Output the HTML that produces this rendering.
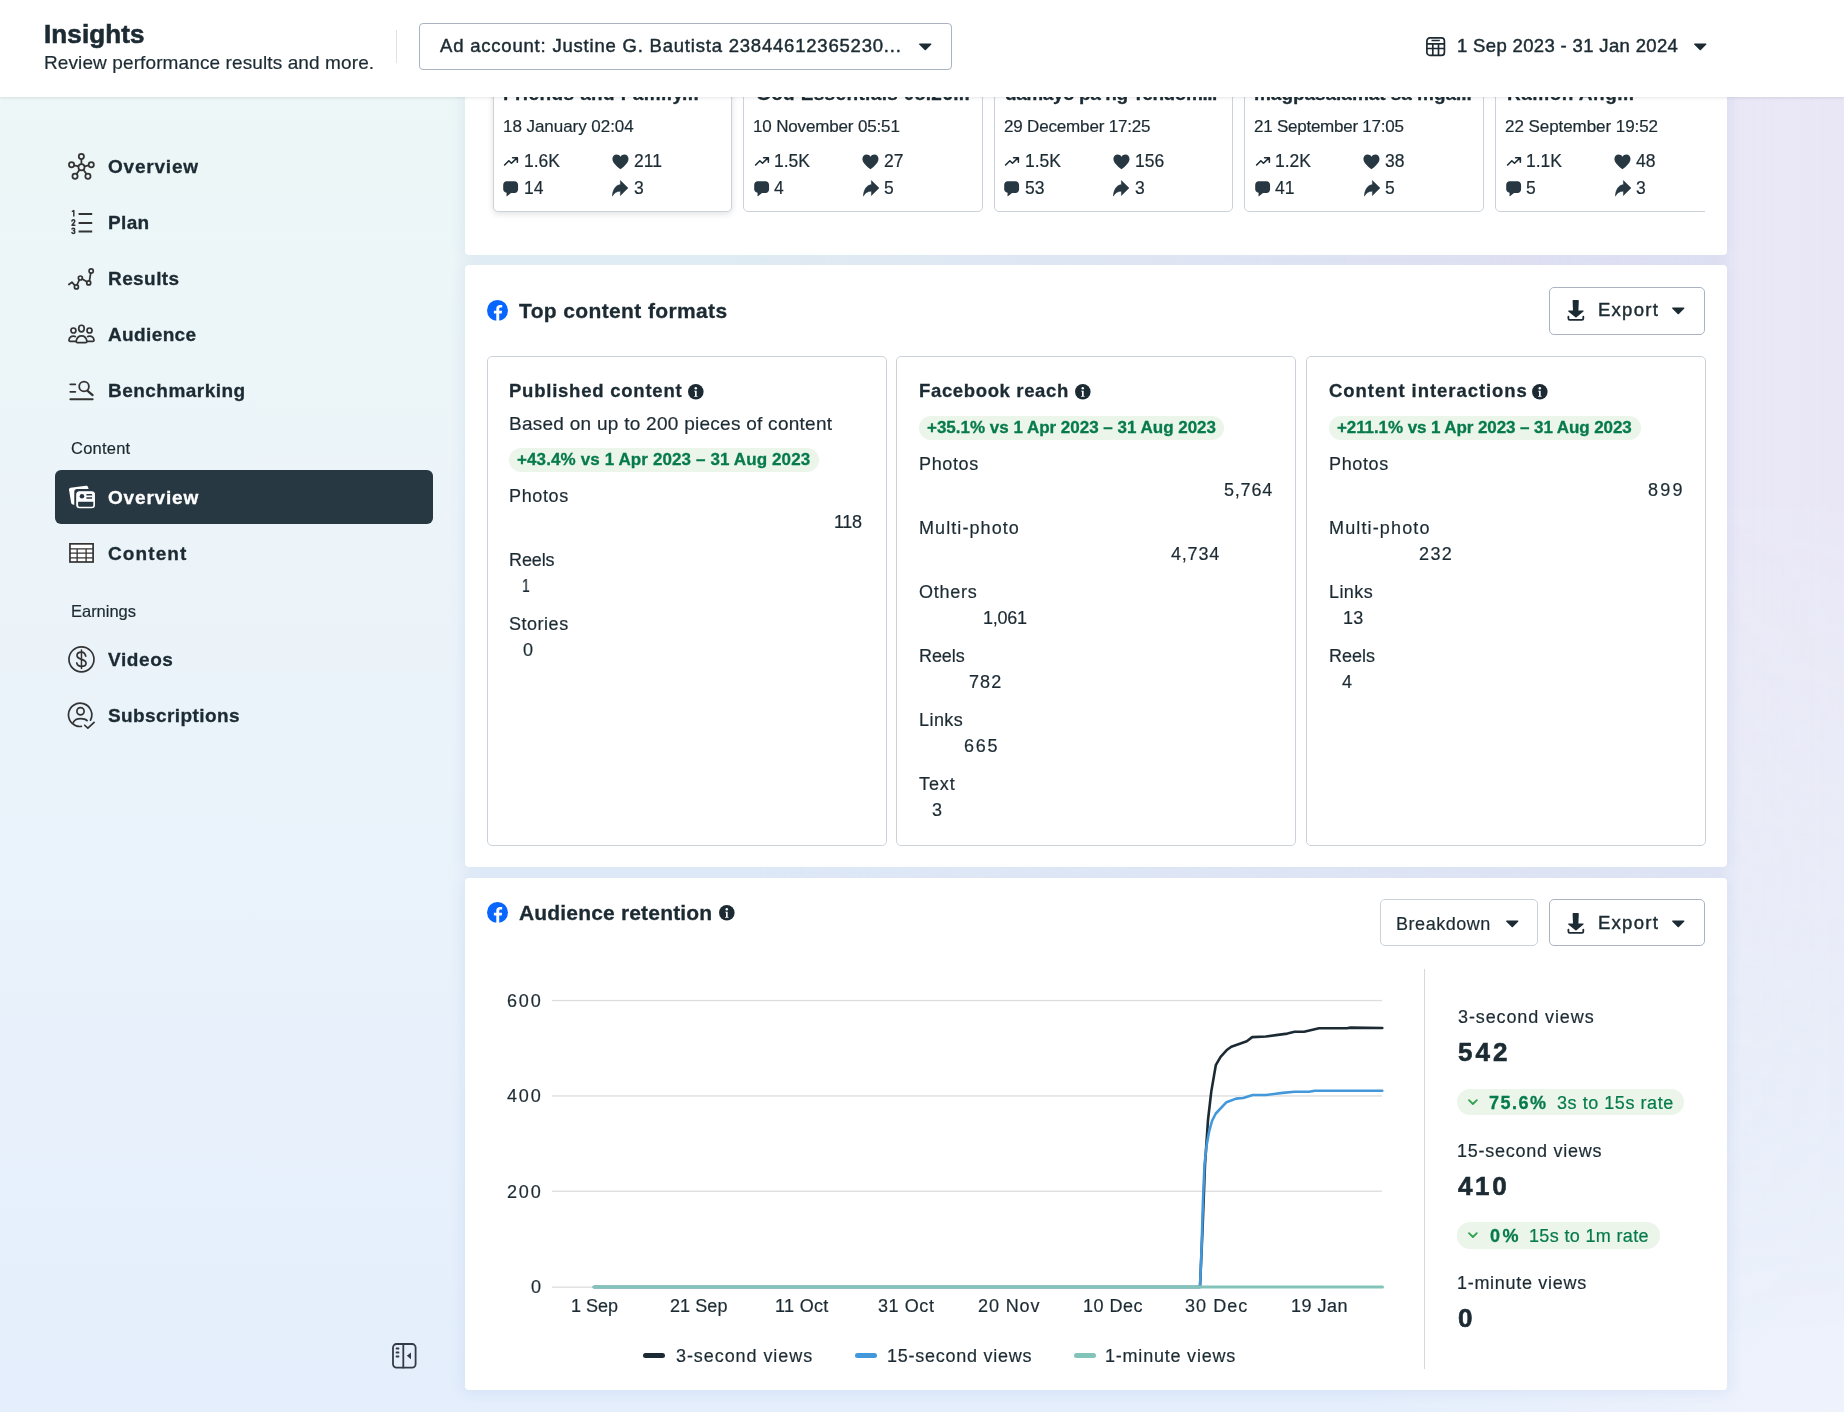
<!DOCTYPE html><html><head><meta charset="utf-8"><style>
*{margin:0;padding:0}
html,body{width:1844px;height:1412px;overflow:hidden}
body{position:relative;font-family:"Liberation Sans",sans-serif;color:#1c2b33;
background:radial-gradient(ellipse 500px 400px at 100% 100%,rgba(240,243,252,0.9),rgba(240,243,252,0)),linear-gradient(180deg,#edf7f6 0%,#ecf5f8 25%,#ebf3fa 50%,#e8f1fb 75%,#e4eefc 100%);}
#lav{position:absolute;left:0;top:0;width:1844px;height:1412px;
background:linear-gradient(90deg,rgba(233,231,246,0) 0%,rgba(233,231,246,0) 40%,rgba(233,231,246,0.85) 80%,rgba(233,231,246,1) 100%);
-webkit-mask-image:linear-gradient(180deg,#000 0%,#000 35%,rgba(0,0,0,0.5) 65%,transparent 95%);}
.t{position:absolute;white-space:nowrap;line-height:1;}
body>div,body>svg{will-change:transform}
svg{overflow:visible}
</style></head><body><div id="lav"></div>
<div style="position:absolute;left:465px;top:40px;width:1262px;height:215px;background:#fff;border-radius:4px;box-shadow:0 0 14px 3px rgba(70,110,190,0.09);"></div>
<div style="position:absolute;left:465px;top:265px;width:1262px;height:602px;background:#fff;border-radius:4px;box-shadow:0 0 14px 3px rgba(70,110,190,0.09);"></div>
<div style="position:absolute;left:465px;top:878px;width:1262px;height:512px;background:#fff;border-radius:4px;box-shadow:0 0 14px 3px rgba(70,110,190,0.09);"></div>
<div style="position:absolute;left:487px;top:40px;width:1218px;height:200px;overflow:hidden">
<div style="position:absolute;left:5.5px;top:0px;width:239.5px;height:172px;border:1px solid #cbd2d9;border-radius:5px;box-sizing:border-box;background:#fff;box-shadow:0 2px 6px rgba(0,0,0,0.12);"></div>
<div style="position:absolute;left:256px;top:0px;width:239.5px;height:172px;border:1px solid #cbd2d9;border-radius:5px;box-sizing:border-box;background:#fff;"></div>
<div style="position:absolute;left:506.5px;top:0px;width:239.5px;height:172px;border:1px solid #cbd2d9;border-radius:5px;box-sizing:border-box;background:#fff;"></div>
<div style="position:absolute;left:757px;top:0px;width:239.5px;height:172px;border:1px solid #cbd2d9;border-radius:5px;box-sizing:border-box;background:#fff;"></div>
<div style="position:absolute;left:1008px;top:0px;width:239.5px;height:172px;border:1px solid #cbd2d9;border-radius:5px;box-sizing:border-box;background:#fff;"></div>
</div>
<div class="t" style="left:503.40px;top:84.00px;font-size:19px;letter-spacing:0.404px;font-weight:700;-webkit-text-stroke:0.3px currentColor;">Friends and Family...</div>
<div class="t" style="left:502.60px;top:117.90px;font-size:17px;letter-spacing:-0.047px;-webkit-text-stroke:0.2px currentColor;">18 January 02:04</div>
<svg style="position:absolute;left:503.0px;top:155.5px;" width="16" height="11" viewBox="0 0 16 11"><path d="M1.6 9.0L5.85 4.77L8.5 7.25L14.0 1.9 M9.6 1.76H14.35V6.2" fill="none" stroke="#1c2b33" stroke-width="1.6" stroke-linecap="round" stroke-linejoin="round"/></svg>
<div class="t" style="left:523.90px;top:153.00px;font-size:17.5px;-webkit-text-stroke:0.2px currentColor;">1.6K</div>
<svg style="position:absolute;left:611.5px;top:153.5px;" width="17" height="16" viewBox="0 0 17 16"><path d="M8.5 15.2C7.6 14.5 0.4 9.6 0.4 5C0.4 2.5 2.2 0.6 4.6 0.6C6.3 0.6 7.7 1.5 8.5 2.8C9.3 1.5 10.7 0.6 12.4 0.6C14.8 0.6 16.5 2.5 16.5 5C16.5 9.6 9.4 14.5 8.5 15.2Z" fill="#283843"/></svg>
<div class="t" style="left:633.90px;top:153.00px;font-size:17.5px;-webkit-text-stroke:0.2px currentColor;">211</div>
<svg style="position:absolute;left:503.0px;top:180.5px;" width="16" height="16" viewBox="0 0 16 16"><path d="M3.7 0.3H11.6C13.5 0.3 15.06 1.9 15.06 3.8V8.5C15.06 10.4 13.5 12 11.6 12H8L3.9 15.2C3.7 15.3 3.5 15.2 3.5 15L3.6 11.8C1.6 11.5 .2 10.1 .2 8.3V3.8C.2 1.9 1.8 .3 3.7 .3Z" fill="#283843"/></svg>
<div class="t" style="left:523.90px;top:180.00px;font-size:17.5px;-webkit-text-stroke:0.2px currentColor;">14</div>
<svg style="position:absolute;left:612.0px;top:179.5px;" width="17" height="17" viewBox="0 0 17 17"><path d="M8.4 0.6L16 8L8.4 15.5V11.2C4.8 11.2 2.3 12.8 0.3 16.2C0.8 9.5 3.6 5.2 8.4 4.6Z" fill="#283843" stroke="#283843" stroke-width="0.5" stroke-linejoin="round"/></svg>
<div class="t" style="left:633.90px;top:180.00px;font-size:17.5px;-webkit-text-stroke:0.2px currentColor;">3</div>
<div class="t" style="left:755.70px;top:84.00px;font-size:19px;letter-spacing:0.352px;font-weight:700;-webkit-text-stroke:0.3px currentColor;">God Essentials 08.26...</div>
<div class="t" style="left:753.10px;top:117.90px;font-size:17px;letter-spacing:-0.153px;-webkit-text-stroke:0.2px currentColor;">10 November 05:51</div>
<svg style="position:absolute;left:753.5px;top:155.5px;" width="16" height="11" viewBox="0 0 16 11"><path d="M1.6 9.0L5.85 4.77L8.5 7.25L14.0 1.9 M9.6 1.76H14.35V6.2" fill="none" stroke="#1c2b33" stroke-width="1.6" stroke-linecap="round" stroke-linejoin="round"/></svg>
<div class="t" style="left:774.40px;top:153.00px;font-size:17.5px;-webkit-text-stroke:0.2px currentColor;">1.5K</div>
<svg style="position:absolute;left:862px;top:153.5px;" width="17" height="16" viewBox="0 0 17 16"><path d="M8.5 15.2C7.6 14.5 0.4 9.6 0.4 5C0.4 2.5 2.2 0.6 4.6 0.6C6.3 0.6 7.7 1.5 8.5 2.8C9.3 1.5 10.7 0.6 12.4 0.6C14.8 0.6 16.5 2.5 16.5 5C16.5 9.6 9.4 14.5 8.5 15.2Z" fill="#283843"/></svg>
<div class="t" style="left:884.40px;top:153.00px;font-size:17.5px;-webkit-text-stroke:0.2px currentColor;">27</div>
<svg style="position:absolute;left:753.5px;top:180.5px;" width="16" height="16" viewBox="0 0 16 16"><path d="M3.7 0.3H11.6C13.5 0.3 15.06 1.9 15.06 3.8V8.5C15.06 10.4 13.5 12 11.6 12H8L3.9 15.2C3.7 15.3 3.5 15.2 3.5 15L3.6 11.8C1.6 11.5 .2 10.1 .2 8.3V3.8C.2 1.9 1.8 .3 3.7 .3Z" fill="#283843"/></svg>
<div class="t" style="left:774.40px;top:180.00px;font-size:17.5px;-webkit-text-stroke:0.2px currentColor;">4</div>
<svg style="position:absolute;left:862.5px;top:179.5px;" width="17" height="17" viewBox="0 0 17 17"><path d="M8.4 0.6L16 8L8.4 15.5V11.2C4.8 11.2 2.3 12.8 0.3 16.2C0.8 9.5 3.6 5.2 8.4 4.6Z" fill="#283843" stroke="#283843" stroke-width="0.5" stroke-linejoin="round"/></svg>
<div class="t" style="left:884.40px;top:180.00px;font-size:17.5px;-webkit-text-stroke:0.2px currentColor;">5</div>
<div class="t" style="left:1005.10px;top:84.00px;font-size:19px;letter-spacing:-0.426px;font-weight:700;-webkit-text-stroke:0.3px currentColor;">damayo pa ng Tehdom...</div>
<div class="t" style="left:1003.60px;top:117.90px;font-size:17px;letter-spacing:-0.172px;-webkit-text-stroke:0.2px currentColor;">29 December 17:25</div>
<svg style="position:absolute;left:1004.0px;top:155.5px;" width="16" height="11" viewBox="0 0 16 11"><path d="M1.6 9.0L5.85 4.77L8.5 7.25L14.0 1.9 M9.6 1.76H14.35V6.2" fill="none" stroke="#1c2b33" stroke-width="1.6" stroke-linecap="round" stroke-linejoin="round"/></svg>
<div class="t" style="left:1024.90px;top:153.00px;font-size:17.5px;-webkit-text-stroke:0.2px currentColor;">1.5K</div>
<svg style="position:absolute;left:1112.5px;top:153.5px;" width="17" height="16" viewBox="0 0 17 16"><path d="M8.5 15.2C7.6 14.5 0.4 9.6 0.4 5C0.4 2.5 2.2 0.6 4.6 0.6C6.3 0.6 7.7 1.5 8.5 2.8C9.3 1.5 10.7 0.6 12.4 0.6C14.8 0.6 16.5 2.5 16.5 5C16.5 9.6 9.4 14.5 8.5 15.2Z" fill="#283843"/></svg>
<div class="t" style="left:1134.90px;top:153.00px;font-size:17.5px;-webkit-text-stroke:0.2px currentColor;">156</div>
<svg style="position:absolute;left:1004.0px;top:180.5px;" width="16" height="16" viewBox="0 0 16 16"><path d="M3.7 0.3H11.6C13.5 0.3 15.06 1.9 15.06 3.8V8.5C15.06 10.4 13.5 12 11.6 12H8L3.9 15.2C3.7 15.3 3.5 15.2 3.5 15L3.6 11.8C1.6 11.5 .2 10.1 .2 8.3V3.8C.2 1.9 1.8 .3 3.7 .3Z" fill="#283843"/></svg>
<div class="t" style="left:1024.90px;top:180.00px;font-size:17.5px;-webkit-text-stroke:0.2px currentColor;">53</div>
<svg style="position:absolute;left:1113.0px;top:179.5px;" width="17" height="17" viewBox="0 0 17 17"><path d="M8.4 0.6L16 8L8.4 15.5V11.2C4.8 11.2 2.3 12.8 0.3 16.2C0.8 9.5 3.6 5.2 8.4 4.6Z" fill="#283843" stroke="#283843" stroke-width="0.5" stroke-linejoin="round"/></svg>
<div class="t" style="left:1134.90px;top:180.00px;font-size:17.5px;-webkit-text-stroke:0.2px currentColor;">3</div>
<div class="t" style="left:1254.30px;top:84.00px;font-size:19px;letter-spacing:-0.038px;font-weight:700;-webkit-text-stroke:0.3px currentColor;">magpasalamat sa mga...</div>
<div class="t" style="left:1254.10px;top:117.90px;font-size:17px;letter-spacing:-0.242px;-webkit-text-stroke:0.2px currentColor;">21 September 17:05</div>
<svg style="position:absolute;left:1254.5px;top:155.5px;" width="16" height="11" viewBox="0 0 16 11"><path d="M1.6 9.0L5.85 4.77L8.5 7.25L14.0 1.9 M9.6 1.76H14.35V6.2" fill="none" stroke="#1c2b33" stroke-width="1.6" stroke-linecap="round" stroke-linejoin="round"/></svg>
<div class="t" style="left:1275.40px;top:153.00px;font-size:17.5px;-webkit-text-stroke:0.2px currentColor;">1.2K</div>
<svg style="position:absolute;left:1363px;top:153.5px;" width="17" height="16" viewBox="0 0 17 16"><path d="M8.5 15.2C7.6 14.5 0.4 9.6 0.4 5C0.4 2.5 2.2 0.6 4.6 0.6C6.3 0.6 7.7 1.5 8.5 2.8C9.3 1.5 10.7 0.6 12.4 0.6C14.8 0.6 16.5 2.5 16.5 5C16.5 9.6 9.4 14.5 8.5 15.2Z" fill="#283843"/></svg>
<div class="t" style="left:1385.40px;top:153.00px;font-size:17.5px;-webkit-text-stroke:0.2px currentColor;">38</div>
<svg style="position:absolute;left:1254.5px;top:180.5px;" width="16" height="16" viewBox="0 0 16 16"><path d="M3.7 0.3H11.6C13.5 0.3 15.06 1.9 15.06 3.8V8.5C15.06 10.4 13.5 12 11.6 12H8L3.9 15.2C3.7 15.3 3.5 15.2 3.5 15L3.6 11.8C1.6 11.5 .2 10.1 .2 8.3V3.8C.2 1.9 1.8 .3 3.7 .3Z" fill="#283843"/></svg>
<div class="t" style="left:1275.40px;top:180.00px;font-size:17.5px;-webkit-text-stroke:0.2px currentColor;">41</div>
<svg style="position:absolute;left:1363.5px;top:179.5px;" width="17" height="17" viewBox="0 0 17 17"><path d="M8.4 0.6L16 8L8.4 15.5V11.2C4.8 11.2 2.3 12.8 0.3 16.2C0.8 9.5 3.6 5.2 8.4 4.6Z" fill="#283843" stroke="#283843" stroke-width="0.5" stroke-linejoin="round"/></svg>
<div class="t" style="left:1385.40px;top:180.00px;font-size:17.5px;-webkit-text-stroke:0.2px currentColor;">5</div>
<div class="t" style="left:1506.50px;top:84.00px;font-size:19px;letter-spacing:0.482px;font-weight:700;-webkit-text-stroke:0.3px currentColor;">Ramon Ang...</div>
<div class="t" style="left:1505.10px;top:117.90px;font-size:17px;letter-spacing:-0.060px;-webkit-text-stroke:0.2px currentColor;">22 September 19:52</div>
<svg style="position:absolute;left:1505.5px;top:155.5px;" width="16" height="11" viewBox="0 0 16 11"><path d="M1.6 9.0L5.85 4.77L8.5 7.25L14.0 1.9 M9.6 1.76H14.35V6.2" fill="none" stroke="#1c2b33" stroke-width="1.6" stroke-linecap="round" stroke-linejoin="round"/></svg>
<div class="t" style="left:1526.40px;top:153.00px;font-size:17.5px;-webkit-text-stroke:0.2px currentColor;">1.1K</div>
<svg style="position:absolute;left:1614px;top:153.5px;" width="17" height="16" viewBox="0 0 17 16"><path d="M8.5 15.2C7.6 14.5 0.4 9.6 0.4 5C0.4 2.5 2.2 0.6 4.6 0.6C6.3 0.6 7.7 1.5 8.5 2.8C9.3 1.5 10.7 0.6 12.4 0.6C14.8 0.6 16.5 2.5 16.5 5C16.5 9.6 9.4 14.5 8.5 15.2Z" fill="#283843"/></svg>
<div class="t" style="left:1636.40px;top:153.00px;font-size:17.5px;-webkit-text-stroke:0.2px currentColor;">48</div>
<svg style="position:absolute;left:1505.5px;top:180.5px;" width="16" height="16" viewBox="0 0 16 16"><path d="M3.7 0.3H11.6C13.5 0.3 15.06 1.9 15.06 3.8V8.5C15.06 10.4 13.5 12 11.6 12H8L3.9 15.2C3.7 15.3 3.5 15.2 3.5 15L3.6 11.8C1.6 11.5 .2 10.1 .2 8.3V3.8C.2 1.9 1.8 .3 3.7 .3Z" fill="#283843"/></svg>
<div class="t" style="left:1526.40px;top:180.00px;font-size:17.5px;-webkit-text-stroke:0.2px currentColor;">5</div>
<svg style="position:absolute;left:1614.5px;top:179.5px;" width="17" height="17" viewBox="0 0 17 17"><path d="M8.4 0.6L16 8L8.4 15.5V11.2C4.8 11.2 2.3 12.8 0.3 16.2C0.8 9.5 3.6 5.2 8.4 4.6Z" fill="#283843" stroke="#283843" stroke-width="0.5" stroke-linejoin="round"/></svg>
<div class="t" style="left:1636.40px;top:180.00px;font-size:17.5px;-webkit-text-stroke:0.2px currentColor;">3</div>
<div style="position:absolute;left:0px;top:0px;width:1844px;height:97px;background:#fff;box-shadow:0 1px 3px rgba(0,0,0,0.10);z-index:5"></div>
<div class="t" style="left:44.20px;top:21.00px;font-size:26px;letter-spacing:0.113px;font-weight:700;-webkit-text-stroke:0.6px currentColor;z-index:6;">Insights</div>
<div class="t" style="left:44.20px;top:53.20px;font-size:19px;letter-spacing:0.108px;-webkit-text-stroke:0.2px currentColor;z-index:6;">Review performance results and more.</div>
<div style="position:absolute;left:396px;top:30px;width:1px;height:33px;background:#dfe3e8;z-index:6"></div>
<div style="position:absolute;left:419px;top:23px;width:532.5px;height:47px;border:1px solid #a9b4c0;border-radius:4px;box-sizing:border-box;z-index:6;background:#fff"></div>
<div class="t" style="left:440.40px;top:37.00px;font-size:18.5px;letter-spacing:0.795px;-webkit-text-stroke:0.45px currentColor;z-index:7;">Ad account: Justine G. Bautista 23844612365230...</div>
<svg style="z-index:7;position:absolute;left:919.3px;top:43px;" width="12.5" height="7.5" viewBox="0 0 12.5 7.5"><path d="M0.6 0.6H11.9C12.4 .6 12.6 1.2 12.3 1.5L6.9 7C6.6 7.3 6 7.3 5.7 7L0.2 1.5C-.1 1.2 .1 .6 .6 .6Z" fill="#1c2b33"/></svg>
<svg style="z-index:7;position:absolute;left:1425.8px;top:36.6px;" width="20" height="20" viewBox="0 0 20 20"><g fill="none" stroke="#1c2b33" stroke-width="1.7"><rect x="0.9" y="0.9" width="17.5" height="17.5" rx="3"/><path d="M0.9 6.8H18.4 M0.9 11.5H18.4 M6.8 6.8V18.4 M12.5 6.8V18.4 M5.5 3.5H13.8"/></g></svg>
<div class="t" style="left:1457.00px;top:36.80px;font-size:18.5px;letter-spacing:0.346px;-webkit-text-stroke:0.45px currentColor;z-index:7;">1 Sep 2023 - 31 Jan 2024</div>
<svg style="z-index:7;position:absolute;left:1694px;top:43.3px;" width="12.5" height="7.5" viewBox="0 0 12.5 7.5"><path d="M0.6 0.6H11.9C12.4 .6 12.6 1.2 12.3 1.5L6.9 7C6.6 7.3 6 7.3 5.7 7L0.2 1.5C-.1 1.2 .1 .6 .6 .6Z" fill="#1c2b33"/></svg>
<div style="position:absolute;left:55px;top:470px;width:377.5px;height:53.5px;background:#283843;border-radius:6px;"></div>
<svg style="position:absolute;left:68px;top:153px;" width="27" height="27" viewBox="0 0 27 27"><g stroke="#333" stroke-width="1.75" fill="none"><circle cx="13.48" cy="14.2" r="3.05"/><circle cx="13.36" cy="3.44" r="2.6"/><circle cx="3.56" cy="11.75" r="2.6"/><circle cx="23.27" cy="11.75" r="2.6"/><circle cx="7.03" cy="23.27" r="2.6"/><circle cx="19.93" cy="23.27" r="2.6"/><path d="M13.4 6.0V11.2 M6.1 12.3L10.5 13.4 M20.7 12.3L16.4 13.4 M8.5 21.1L11.6 16.7 M18.5 21.1L15.4 16.7"/></g></svg>
<div class="t" style="left:108.20px;top:157.00px;font-size:19px;letter-spacing:0.793px;font-weight:700;-webkit-text-stroke:0.3px currentColor;">Overview</div>
<svg style="position:absolute;left:70.5px;top:210px;" width="22" height="25" viewBox="0 0 22 25"><g stroke="#333" stroke-width="2" stroke-linecap="butt"><path d="M7.6 3.9H21.2 M7.6 12.9H21.2 M7.6 21.6H21.2"/></g><g fill="none" stroke="#333" stroke-width="1.45" stroke-linejoin="round" stroke-linecap="round"><path d="M1.3 1.3L2.8 0.6V6.1"/><path d="M0.9 11.0C1.1 10.1 1.7 9.7 2.4 9.7C3.2 9.7 3.8 10.2 3.8 11.0C3.8 12.2 2.4 13.2 1.0 15.2H3.9"/><path d="M1.0 18.9C1.3 18.4 1.8 18.2 2.4 18.2C3.2 18.2 3.7 18.7 3.7 19.4C3.7 20.1 3.1 20.6 2.3 20.6C3.2 20.6 3.9 21.1 3.9 22.0C3.9 22.9 3.2 23.5 2.3 23.5C1.7 23.5 1.1 23.2 0.9 22.6"/></g></svg>
<div class="t" style="left:108.20px;top:212.70px;font-size:19px;letter-spacing:0.337px;font-weight:700;-webkit-text-stroke:0.3px currentColor;">Plan</div>
<svg style="position:absolute;left:68px;top:267.5px;" width="27" height="22" viewBox="0 0 27 22"><g stroke="#333" stroke-width="1.7" fill="none" stroke-linecap="round" stroke-linejoin="round"><path d="M0.9 16.5L3.94 14.16L6.6 17.1 M9.0 16.9L11.3 11.9 M14.3 10.9L18.9 13.7 M21.4 13.0L22.7 5.1"/><circle cx="8.4" cy="18.92" r="2.0"/><circle cx="12.37" cy="9.99" r="2.0"/><circle cx="20.7" cy="14.95" r="2.0"/><circle cx="23.18" cy="3.05" r="2.1"/></g></svg>
<div class="t" style="left:108.20px;top:268.80px;font-size:19px;letter-spacing:0.418px;font-weight:700;-webkit-text-stroke:0.3px currentColor;">Results</div>
<svg style="position:absolute;left:68px;top:324px;" width="27" height="20" viewBox="0 0 27 20"><g stroke="#333" stroke-width="1.7" fill="none" stroke-linejoin="round"><ellipse cx="13.46" cy="4.53" rx="2.75" ry="3.3"/><circle cx="5.42" cy="6.52" r="2.5"/><circle cx="21.5" cy="6.52" r="2.5"/><path d="M9.4 18.55H17.7C18.5 18.55 19 18 18.9 17.2C18.3 13.9 16.6 11.95 13.55 11.95C10.5 11.95 8.8 13.9 8.2 17.2C8.1 18 8.6 18.55 9.4 18.55Z"/><path d="M7.9 12.9C7.2 12.4 6.3 12.15 5.3 12.15C3 12.15 1.4 13.8 1 16C.9 16.8 1.4 17.35 2.2 17.35H8.2"/><path d="M19.1 12.9C19.8 12.4 20.7 12.15 21.7 12.15C24 12.15 25.6 13.8 26 16C26.1 16.8 25.6 17.35 24.8 17.35H18.8"/></g></svg>
<div class="t" style="left:108.20px;top:324.70px;font-size:19px;letter-spacing:0.371px;font-weight:700;-webkit-text-stroke:0.3px currentColor;">Audience</div>
<svg style="position:absolute;left:69px;top:380.7px;" width="25" height="20" viewBox="0 0 25 20"><g stroke="#333" fill="none" stroke-linecap="round"><path d="M1.3 3.34H6.3 M1.3 10.78H6.3" stroke-width="1.8"/><path d="M1.4 18.2H23.6" stroke-width="2"/><circle cx="15.04" cy="5.52" r="4.85" stroke-width="1.8"/><path d="M18.6 9.8L23.6 14.1" stroke-width="2.2"/></g></svg>
<div class="t" style="left:108.20px;top:381.00px;font-size:19px;letter-spacing:0.468px;font-weight:700;-webkit-text-stroke:0.3px currentColor;">Benchmarking</div>
<div class="t" style="left:71.10px;top:440.00px;font-size:16.5px;letter-spacing:0.228px;-webkit-text-stroke:0.2px currentColor;">Content</div>
<svg style="position:absolute;left:67.5px;top:485px;" width="28" height="24" viewBox="0 0 28 24"><path d="M2.6 2.8L17.9 0.8C18.9 .7 19.7 1.2 20 2.1L20.6 3.9H9C7.4 3.9 6.3 5 6.3 6.6V19.9L4.9 19.6C3.9 19.3 3.2 18.6 3.1 17.6L1.0 4.8C.9 3.8 1.6 3 2.6 2.8Z" fill="#fff"/><rect x="7.6" y="5.66" width="20" height="18.34" rx="4" fill="#fff" stroke="#283843" stroke-width="1.4"/><rect x="8.6" y="6.66" width="18" height="16.34" rx="3" fill="#fff"/><circle cx="13.96" cy="11.3" r="2.3" fill="#283843"/><rect x="18.3" y="9.1" width="5.9" height="1.5" rx=".5" fill="#283843"/><rect x="18.3" y="12.25" width="5.9" height="1.5" rx=".5" fill="#283843"/><path d="M10.1 16.8H25.3V20.2C25.3 21.1 24.6 21.75 23.8 21.75H11.6C10.8 21.75 10.1 21.1 10.1 20.2Z" fill="#283843"/></svg>
<div class="t" style="left:108.00px;top:488.00px;font-size:19px;letter-spacing:0.821px;font-weight:700;color:#fff;-webkit-text-stroke:0.3px currentColor;">Overview</div>
<svg style="position:absolute;left:69px;top:543px;" width="25" height="20" viewBox="0 0 25 20"><rect x="0.95" y="0.85" width="23.15" height="18.15" fill="#fff" stroke="#333" stroke-width="1.7"/><g stroke="#333" stroke-width="1.3"><path d="M1 5.85H24 M1 10.2H24 M1 14.95H24 M8.15 5.85V19 M17.1 5.85V19"/></g></svg>
<div class="t" style="left:108.00px;top:543.80px;font-size:19px;letter-spacing:1.096px;font-weight:700;-webkit-text-stroke:0.3px currentColor;">Content</div>
<div class="t" style="left:70.70px;top:602.90px;font-size:16.5px;letter-spacing:-0.027px;-webkit-text-stroke:0.2px currentColor;">Earnings</div>
<svg style="position:absolute;left:68px;top:646px;" width="27" height="27" viewBox="0 0 27 27"><g fill="none" stroke="#333" stroke-width="1.7" stroke-linecap="round"><circle cx="13.47" cy="13.35" r="12.5"/><path d="M17.7 10.2C17.2 7.6 15.5 6.1 13.47 6.1C11 6.1 9 7.5 9 9.6C9 11.8 11 12.6 13.47 13.35C16 14.1 18.05 15 18.05 17.2C18.05 19.2 16 20.3 13.47 20.3C11.2 20.3 9.3 19.1 8.77 16.96"/><path d="M13.47 4.0V22.6" stroke-width="1.5"/></g></svg>
<div class="t" style="left:108.10px;top:649.90px;font-size:19px;letter-spacing:0.592px;font-weight:700;-webkit-text-stroke:0.3px currentColor;">Videos</div>
<svg style="position:absolute;left:68px;top:701.5px;" width="27" height="29" viewBox="0 0 27 29"><g fill="none" stroke="#333" stroke-width="1.7" stroke-linecap="round" stroke-linejoin="round"><path d="M22.5 18.2A11.65 11.65 0 1 0 13.35 24.45"/><circle cx="12.5" cy="9.27" r="3.6"/><path d="M5.3 20.4C6.6 17.8 8.9 16.6 12.5 16.6C15.9 16.6 18 17.4 19.1 18.6"/><path d="M16.7 23.25L19.86 26.2L26.1 20.3"/></g></svg>
<div class="t" style="left:108.10px;top:705.80px;font-size:19px;letter-spacing:0.406px;font-weight:700;-webkit-text-stroke:0.3px currentColor;">Subscriptions</div>
<svg style="position:absolute;left:391.5px;top:1342.5px;" width="25" height="26" viewBox="0 0 25 26"><g fill="none" stroke="#343a43" stroke-width="1.8" stroke-linecap="round"><rect x="1" y="1" width="22.6" height="23.6" rx="3.5"/><path d="M11.3 1V24.6"/><path d="M4.5 5.5H6.5 M4.5 9.5H6.5 M4.5 13.5H6.5"/></g><path d="M14.8 12.8L19 9.5V16.2Z" fill="#343a43"/></svg>
<svg style="position:absolute;left:487px;top:300px;" width="21" height="21" viewBox="0 0 21 21"><circle cx="10.5" cy="10.5" r="10.5" fill="#0866ff"/><path d="M12.2 21V13.6H14.7L15.1 10.8H12.2V9C12.2 8.2 12.5 7.6 13.7 7.6H15.2V5.1C14.7 5 13.9 4.9 13 4.9 10.9 4.9 9.3 6.2 9.3 8.6V10.8H6.9V13.6H9.3V21Z" fill="#fff"/></svg>
<div class="t" style="left:518.60px;top:299.80px;font-size:21px;letter-spacing:0.373px;font-weight:700;-webkit-text-stroke:0.3px currentColor;">Top content formats</div>
<div style="position:absolute;left:1549px;top:287px;width:155.5px;height:47.5px;border:1px solid #a9b4c0;border-radius:5px;box-sizing:border-box;"></div>
<svg style="position:absolute;left:1567px;top:300.2px;" width="18" height="21" viewBox="0 0 18 21"><path d="M6.3 0H11C11.5 0 11.8.3 11.8.8L11.4 10.5H16C16.6 10.5 16.9 11.2 16.4 11.6L9.5 17.3C9.2 17.6 8.7 17.6 8.4 17.3L1.3 11.6C.9 11.2 1.2 10.5 1.8 10.5H6L5.6.8C5.6.3 5.9 0 6.3 0Z" fill="#1c2b33"/><path d="M1.4 16.6V18.6C1.4 19.3 1.9 19.9 2.7 19.9H15C15.8 19.9 16.3 19.3 16.3 18.6V16.6" fill="none" stroke="#1c2b33" stroke-width="1.8" stroke-linecap="round"/></svg>
<div class="t" style="left:1597.70px;top:300.80px;font-size:18.5px;letter-spacing:1.267px;-webkit-text-stroke:0.45px currentColor;">Export</div>
<svg style="position:absolute;left:1672.4px;top:307px;" width="12.5" height="7.5" viewBox="0 0 12.5 7.5"><path d="M0.6 0.6H11.9C12.4 .6 12.6 1.2 12.3 1.5L6.9 7C6.6 7.3 6 7.3 5.7 7L0.2 1.5C-.1 1.2 .1 .6 .6 .6Z" fill="#1c2b33"/></svg>
<div style="position:absolute;left:487px;top:356px;width:399.5px;height:490px;border:1px solid #cbd2d9;border-radius:5px;box-sizing:border-box;"></div>
<div style="position:absolute;left:896px;top:356px;width:399.5px;height:490px;border:1px solid #cbd2d9;border-radius:5px;box-sizing:border-box;"></div>
<div style="position:absolute;left:1305.5px;top:356px;width:399.5px;height:490px;border:1px solid #cbd2d9;border-radius:5px;box-sizing:border-box;"></div>
<div class="t" style="left:509.20px;top:381.80px;font-size:18.5px;letter-spacing:0.769px;font-weight:700;-webkit-text-stroke:0.3px currentColor;">Published content</div>
<svg style="position:absolute;left:688.2px;top:384.2px;" width="15.6" height="15.6" viewBox="0 0 16 16"><circle cx="8" cy="8" r="8" fill="#1c2b33"/><circle cx="8" cy="4.4" r="1.25" fill="#fff"/><path d="M6.3 6.9H8.9V12.3H9.8V13.1H6.3V12.3H7.2V7.7H6.3Z" fill="#fff"/></svg>
<div class="t" style="left:509.20px;top:414.20px;font-size:19px;letter-spacing:0.266px;-webkit-text-stroke:0.2px currentColor;">Based on up to 200 pieces of content</div>
<div style="position:absolute;left:509px;top:448px;width:310px;height:24px;background:#ebf5ea;border-radius:12px;"></div>
<div class="t" style="left:517.40px;top:451.20px;font-size:17px;letter-spacing:0.117px;font-weight:700;color:#067a4c;-webkit-text-stroke:0.3px currentColor;">+43.4% vs 1 Apr 2023 – 31 Aug 2023</div>
<div class="t" style="left:509.20px;top:487.00px;font-size:18px;letter-spacing:0.646px;-webkit-text-stroke:0.2px currentColor;">Photos</div>
<div class="t" style="left:834.40px;top:513.30px;font-size:18px;letter-spacing:-0.305px;-webkit-text-stroke:0.2px currentColor;">118</div>
<div class="t" style="left:509.20px;top:551.00px;font-size:18px;letter-spacing:-0.122px;-webkit-text-stroke:0.2px currentColor;">Reels</div>
<div class="t" style="left:522.20px;top:577.30px;font-size:18px;transform:scaleX(0.7608);transform-origin:0.00px 0;-webkit-text-stroke:0.2px currentColor;">1</div>
<div class="t" style="left:509.20px;top:615.00px;font-size:18px;letter-spacing:0.520px;-webkit-text-stroke:0.2px currentColor;">Stories</div>
<div class="t" style="left:522.70px;top:641.30px;font-size:18px;letter-spacing:0.510px;-webkit-text-stroke:0.2px currentColor;">0</div>
<div class="t" style="left:919.20px;top:381.80px;font-size:18.5px;letter-spacing:0.648px;font-weight:700;-webkit-text-stroke:0.3px currentColor;">Facebook reach</div>
<svg style="position:absolute;left:1075px;top:384.2px;" width="15.6" height="15.6" viewBox="0 0 16 16"><circle cx="8" cy="8" r="8" fill="#1c2b33"/><circle cx="8" cy="4.4" r="1.25" fill="#fff"/><path d="M6.3 6.9H8.9V12.3H9.8V13.1H6.3V12.3H7.2V7.7H6.3Z" fill="#fff"/></svg>
<div style="position:absolute;left:919px;top:416.4px;width:305.4px;height:24px;background:#ebf5ea;border-radius:12px;"></div>
<div class="t" style="left:927.40px;top:418.80px;font-size:17px;letter-spacing:-0.010px;font-weight:700;color:#067a4c;-webkit-text-stroke:0.3px currentColor;">+35.1% vs 1 Apr 2023 – 31 Aug 2023</div>
<div class="t" style="left:919.20px;top:455.00px;font-size:18px;letter-spacing:0.646px;-webkit-text-stroke:0.2px currentColor;">Photos</div>
<div class="t" style="left:1223.80px;top:481.30px;font-size:18px;letter-spacing:0.803px;-webkit-text-stroke:0.2px currentColor;">5,764</div>
<div class="t" style="left:919.20px;top:519.00px;font-size:18px;letter-spacing:1.079px;-webkit-text-stroke:0.2px currentColor;">Multi-photo</div>
<div class="t" style="left:1171.20px;top:545.30px;font-size:18px;letter-spacing:0.803px;-webkit-text-stroke:0.2px currentColor;">4,734</div>
<div class="t" style="left:919.20px;top:583.00px;font-size:18px;letter-spacing:0.760px;-webkit-text-stroke:0.2px currentColor;">Others</div>
<div class="t" style="left:983.20px;top:609.30px;font-size:18px;letter-spacing:-0.272px;-webkit-text-stroke:0.2px currentColor;">1,061</div>
<div class="t" style="left:919.20px;top:647.00px;font-size:18px;letter-spacing:-0.097px;-webkit-text-stroke:0.2px currentColor;">Reels</div>
<div class="t" style="left:969.20px;top:673.30px;font-size:18px;letter-spacing:1.070px;-webkit-text-stroke:0.2px currentColor;">782</div>
<div class="t" style="left:919.20px;top:711.00px;font-size:18px;letter-spacing:0.442px;-webkit-text-stroke:0.2px currentColor;">Links</div>
<div class="t" style="left:963.70px;top:737.30px;font-size:18px;letter-spacing:1.770px;-webkit-text-stroke:0.2px currentColor;">665</div>
<div class="t" style="left:919.20px;top:775.00px;font-size:18px;letter-spacing:0.890px;-webkit-text-stroke:0.2px currentColor;">Text</div>
<div class="t" style="left:932.40px;top:801.30px;font-size:18px;letter-spacing:0.710px;-webkit-text-stroke:0.2px currentColor;">3</div>
<div class="t" style="left:1328.90px;top:381.80px;font-size:18.5px;letter-spacing:0.947px;font-weight:700;-webkit-text-stroke:0.3px currentColor;">Content interactions</div>
<svg style="position:absolute;left:1531.9px;top:384.2px;" width="15.6" height="15.6" viewBox="0 0 16 16"><circle cx="8" cy="8" r="8" fill="#1c2b33"/><circle cx="8" cy="4.4" r="1.25" fill="#fff"/><path d="M6.3 6.9H8.9V12.3H9.8V13.1H6.3V12.3H7.2V7.7H6.3Z" fill="#fff"/></svg>
<div style="position:absolute;left:1329px;top:416.4px;width:312px;height:24px;background:#ebf5ea;border-radius:12px;"></div>
<div class="t" style="left:1337.30px;top:418.80px;font-size:17px;letter-spacing:-0.092px;font-weight:700;color:#067a4c;-webkit-text-stroke:0.3px currentColor;">+211.1% vs 1 Apr 2023 – 31 Aug 2023</div>
<div class="t" style="left:1328.90px;top:455.00px;font-size:18px;letter-spacing:0.646px;-webkit-text-stroke:0.2px currentColor;">Photos</div>
<div class="t" style="left:1648.10px;top:481.30px;font-size:18px;letter-spacing:2.270px;-webkit-text-stroke:0.2px currentColor;">899</div>
<div class="t" style="left:1328.90px;top:519.00px;font-size:18px;letter-spacing:1.139px;-webkit-text-stroke:0.2px currentColor;">Multi-photo</div>
<div class="t" style="left:1419.10px;top:545.30px;font-size:18px;letter-spacing:1.420px;-webkit-text-stroke:0.2px currentColor;">232</div>
<div class="t" style="left:1328.90px;top:583.00px;font-size:18px;letter-spacing:0.417px;-webkit-text-stroke:0.2px currentColor;">Links</div>
<div class="t" style="left:1342.90px;top:609.30px;font-size:18px;letter-spacing:0.320px;-webkit-text-stroke:0.2px currentColor;">13</div>
<div class="t" style="left:1328.90px;top:647.00px;font-size:18px;-webkit-text-stroke:0.2px currentColor;">Reels</div>
<div class="t" style="left:1342.00px;top:673.30px;font-size:18px;letter-spacing:1.210px;-webkit-text-stroke:0.2px currentColor;">4</div>
<svg style="position:absolute;left:487px;top:901.8px;" width="21" height="21" viewBox="0 0 21 21"><circle cx="10.5" cy="10.5" r="10.5" fill="#0866ff"/><path d="M12.2 21V13.6H14.7L15.1 10.8H12.2V9C12.2 8.2 12.5 7.6 13.7 7.6H15.2V5.1C14.7 5 13.9 4.9 13 4.9 10.9 4.9 9.3 6.2 9.3 8.6V10.8H6.9V13.6H9.3V21Z" fill="#fff"/></svg>
<div class="t" style="left:519.20px;top:901.60px;font-size:21px;letter-spacing:0.173px;font-weight:700;-webkit-text-stroke:0.3px currentColor;">Audience retention</div>
<svg style="position:absolute;left:719.2px;top:905px;" width="15.6" height="15.6" viewBox="0 0 16 16"><circle cx="8" cy="8" r="8" fill="#1c2b33"/><circle cx="8" cy="4.4" r="1.25" fill="#fff"/><path d="M6.3 6.9H8.9V12.3H9.8V13.1H6.3V12.3H7.2V7.7H6.3Z" fill="#fff"/></svg>
<div style="position:absolute;left:1380px;top:899.4px;width:157.5px;height:47.2px;border:1px solid #ccd2da;border-radius:5px;box-sizing:border-box;"></div>
<div class="t" style="left:1395.60px;top:914.90px;font-size:18px;letter-spacing:0.539px;-webkit-text-stroke:0.2px currentColor;">Breakdown</div>
<svg style="position:absolute;left:1506px;top:920.3px;" width="12.5" height="7.5" viewBox="0 0 12.5 7.5"><path d="M0.6 0.6H11.9C12.4 .6 12.6 1.2 12.3 1.5L6.9 7C6.6 7.3 6 7.3 5.7 7L0.2 1.5C-.1 1.2 .1 .6 .6 .6Z" fill="#1c2b33"/></svg>
<div style="position:absolute;left:1549px;top:899.4px;width:155.5px;height:47.2px;border:1px solid #a9b4c0;border-radius:5px;box-sizing:border-box;"></div>
<svg style="position:absolute;left:1566.8px;top:912.6px;" width="18" height="21" viewBox="0 0 18 21"><path d="M6.3 0H11C11.5 0 11.8.3 11.8.8L11.4 10.5H16C16.6 10.5 16.9 11.2 16.4 11.6L9.5 17.3C9.2 17.6 8.7 17.6 8.4 17.3L1.3 11.6C.9 11.2 1.2 10.5 1.8 10.5H6L5.6.8C5.6.3 5.9 0 6.3 0Z" fill="#1c2b33"/><path d="M1.4 16.6V18.6C1.4 19.3 1.9 19.9 2.7 19.9H15C15.8 19.9 16.3 19.3 16.3 18.6V16.6" fill="none" stroke="#1c2b33" stroke-width="1.8" stroke-linecap="round"/></svg>
<div class="t" style="left:1597.70px;top:913.90px;font-size:18.5px;letter-spacing:1.267px;-webkit-text-stroke:0.45px currentColor;">Export</div>
<svg style="position:absolute;left:1672.2px;top:920.3px;" width="12.5" height="7.5" viewBox="0 0 12.5 7.5"><path d="M0.6 0.6H11.9C12.4 .6 12.6 1.2 12.3 1.5L6.9 7C6.6 7.3 6 7.3 5.7 7L0.2 1.5C-.1 1.2 .1 .6 .6 .6Z" fill="#1c2b33"/></svg>
<svg style="position:absolute;left:0;top:0" width="1844" height="1412" viewBox="0 0 1844 1412"><rect x="552" y="999.9" width="830" height="1.3" fill="#dddddd"/><rect x="552" y="1095.3" width="830" height="1.3" fill="#dddddd"/><rect x="552" y="1190.6" width="830" height="1.3" fill="#dddddd"/><rect x="552" y="1286.5" width="830" height="1.3" fill="#dddddd"/><polyline points="594.0,1287.0 1200.0,1287.0 1202.5,1230.0 1205.0,1165.0 1208.0,1120.0 1211.3,1091.4 1215.8,1065.2 1220.6,1056.8 1226.5,1050.3 1231.3,1046.7 1246.8,1041.3 1252.2,1037.1 1265.9,1036.5 1287.4,1033.6 1294.6,1031.8 1304.1,1031.8 1319.0,1028.2 1347.0,1028.2 1350.6,1027.6 1382.3,1028.0" fill="none" stroke="#1c2b33" stroke-width="2.6" stroke-linejoin="round" stroke-linecap="round"/><polyline points="594.0,1287.0 1200.0,1287.0 1201.5,1250.0 1203.0,1200.0 1204.5,1165.0 1206.5,1146.0 1209.0,1132.0 1212.0,1121.0 1215.8,1113.5 1226.5,1102.2 1236.1,1098.6 1243.2,1098.0 1252.8,1095.0 1265.9,1095.0 1282.6,1092.9 1294.6,1091.7 1308.9,1091.7 1314.8,1090.8 1382.3,1090.8" fill="none" stroke="#4398db" stroke-width="2.6" stroke-linejoin="round" stroke-linecap="round"/><line x1="594" y1="1287" x2="1382.5" y2="1287" stroke="#82c4b9" stroke-width="3" stroke-linecap="round"/></svg>
<div class="t" style="left:507.30px;top:991.80px;font-size:18px;letter-spacing:1.820px;-webkit-text-stroke:0.2px currentColor;">600</div>
<div class="t" style="left:507.30px;top:1087.20px;font-size:18px;letter-spacing:1.820px;-webkit-text-stroke:0.2px currentColor;">400</div>
<div class="t" style="left:507.30px;top:1182.50px;font-size:18px;letter-spacing:1.820px;-webkit-text-stroke:0.2px currentColor;">200</div>
<div class="t" style="left:530.60px;top:1278.40px;font-size:18px;letter-spacing:0.510px;-webkit-text-stroke:0.2px currentColor;">0</div>
<div class="t" style="left:571.30px;top:1296.80px;font-size:18px;letter-spacing:-0.018px;-webkit-text-stroke:0.2px currentColor;">1 Sep</div>
<div class="t" style="left:669.70px;top:1296.80px;font-size:18px;letter-spacing:0.068px;-webkit-text-stroke:0.2px currentColor;">21 Sep</div>
<div class="t" style="left:775.10px;top:1296.80px;font-size:18px;letter-spacing:0.328px;-webkit-text-stroke:0.2px currentColor;">11 Oct</div>
<div class="t" style="left:877.60px;top:1296.80px;font-size:18px;letter-spacing:0.578px;-webkit-text-stroke:0.2px currentColor;">31 Oct</div>
<div class="t" style="left:978.00px;top:1296.80px;font-size:18px;letter-spacing:0.888px;-webkit-text-stroke:0.2px currentColor;">20 Nov</div>
<div class="t" style="left:1082.50px;top:1296.80px;font-size:18px;letter-spacing:0.488px;-webkit-text-stroke:0.2px currentColor;">10 Dec</div>
<div class="t" style="left:1185.00px;top:1296.80px;font-size:18px;letter-spacing:1.068px;-webkit-text-stroke:0.2px currentColor;">30 Dec</div>
<div class="t" style="left:1291.30px;top:1296.80px;font-size:18px;letter-spacing:0.502px;-webkit-text-stroke:0.2px currentColor;">19 Jan</div>
<div style="position:absolute;left:643px;top:1353px;width:22px;height:5px;background:#1c2b33;border-radius:3px;"></div>
<div class="t" style="left:675.80px;top:1346.90px;font-size:18px;letter-spacing:0.929px;-webkit-text-stroke:0.2px currentColor;">3-second views</div>
<div style="position:absolute;left:854.6px;top:1353px;width:21.5px;height:5px;background:#4398db;border-radius:3px;"></div>
<div class="t" style="left:886.60px;top:1346.90px;font-size:18px;letter-spacing:0.743px;-webkit-text-stroke:0.2px currentColor;">15-second views</div>
<div style="position:absolute;left:1073.8px;top:1353px;width:22px;height:5px;background:#82c4b9;border-radius:3px;"></div>
<div class="t" style="left:1105.20px;top:1346.90px;font-size:18px;letter-spacing:0.788px;-webkit-text-stroke:0.2px currentColor;">1-minute views</div>
<div style="position:absolute;left:1424px;top:969px;width:1.2px;height:400px;background:#d3d9e0;"></div>
<div class="t" style="left:1457.70px;top:1007.60px;font-size:18px;letter-spacing:0.891px;-webkit-text-stroke:0.2px currentColor;">3-second views</div>
<div class="t" style="left:1458.40px;top:1039.20px;font-size:26px;letter-spacing:3.090px;font-weight:700;-webkit-text-stroke:0.6px currentColor;">542</div>
<div style="position:absolute;left:1457px;top:1089px;width:227px;height:26px;background:#ebf5ea;border-radius:13px;"></div>
<svg style="position:absolute;left:1468.3px;top:1098.6px;" width="10" height="6.5" viewBox="0 0 10 6.5"><path d="M1 1.2L4.9 5L8.8 1.2" fill="none" stroke="#31a24c" stroke-width="1.8" stroke-linecap="round" stroke-linejoin="round"/></svg>
<div class="t" style="left:1488.90px;top:1094.20px;font-size:18px;letter-spacing:1.492px;font-weight:700;color:#067a4c;-webkit-text-stroke:0.3px currentColor;">75.6%</div>
<div class="t" style="left:1556.90px;top:1094.20px;font-size:18px;letter-spacing:0.548px;color:#067a4c;-webkit-text-stroke:0.2px currentColor;">3s to 15s rate</div>
<div class="t" style="left:1456.90px;top:1141.90px;font-size:18px;letter-spacing:0.750px;-webkit-text-stroke:0.2px currentColor;">15-second views</div>
<div class="t" style="left:1457.80px;top:1172.60px;font-size:26px;letter-spacing:2.640px;font-weight:700;-webkit-text-stroke:0.6px currentColor;">410</div>
<div style="position:absolute;left:1457px;top:1222px;width:202.6px;height:26.6px;background:#ebf5ea;border-radius:13px;"></div>
<svg style="position:absolute;left:1468px;top:1231.8px;" width="10" height="6.5" viewBox="0 0 10 6.5"><path d="M1 1.2L4.9 5L8.8 1.2" fill="none" stroke="#31a24c" stroke-width="1.8" stroke-linecap="round" stroke-linejoin="round"/></svg>
<div class="t" style="left:1489.60px;top:1226.50px;font-size:18px;letter-spacing:2.390px;font-weight:700;color:#067a4c;-webkit-text-stroke:0.3px currentColor;">0%</div>
<div class="t" style="left:1529.10px;top:1226.50px;font-size:18px;letter-spacing:0.345px;color:#067a4c;-webkit-text-stroke:0.2px currentColor;">15s to 1m rate</div>
<div class="t" style="left:1456.90px;top:1274.30px;font-size:18px;letter-spacing:0.703px;-webkit-text-stroke:0.2px currentColor;">1-minute views</div>
<div class="t" style="left:1457.80px;top:1304.80px;font-size:26px;letter-spacing:2.970px;font-weight:700;-webkit-text-stroke:0.6px currentColor;">0</div></body></html>
